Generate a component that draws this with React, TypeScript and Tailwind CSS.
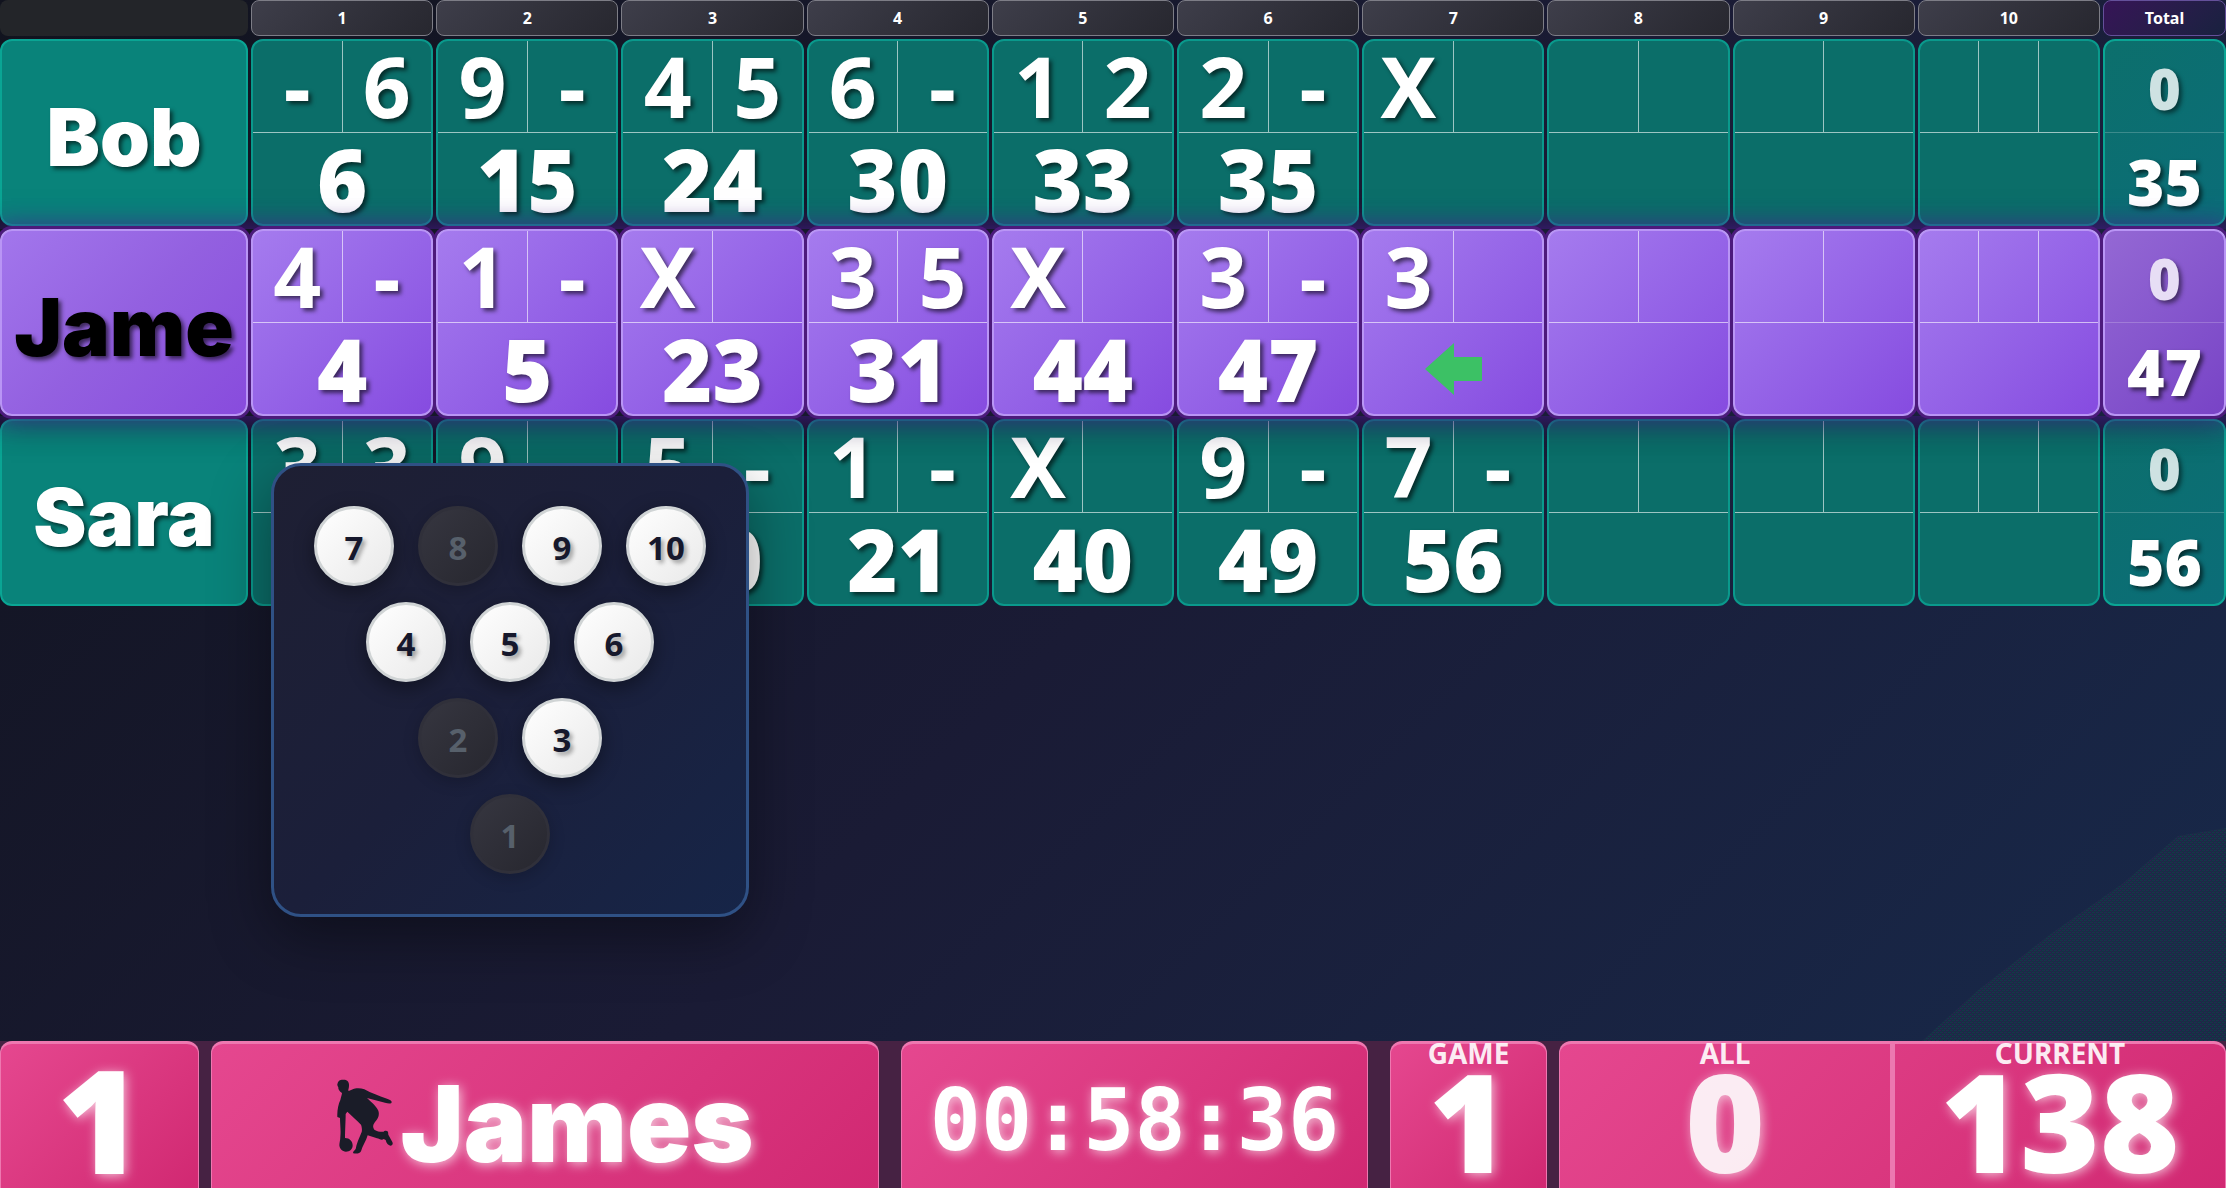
import clsx from "clsx";
import type { ReactNode } from "react";

type Player = {
  name: string;
  active?: boolean;
  throws: string[][];
  totals: string[];
  handicap: string;
  total: string;
};

const FRAMES = [1, 2, 3, 4, 5, 6, 7, 8, 9, 10];

const players: Player[] = [
  {
    name: "Bob",
    throws: [["-", "6"], ["9", "-"], ["4", "5"], ["6", "-"], ["1", "2"], ["2", "-"], ["X", ""]],
    totals: ["6", "15", "24", "30", "33", "35"],
    handicap: "0",
    total: "35",
  },
  {
    name: "Jame",
    active: true,
    throws: [["4", "-"], ["1", "-"], ["X", ""], ["3", "5"], ["X", ""], ["3", "-"], ["3", ""]],
    totals: ["4", "5", "23", "31", "44", "47"],
    handicap: "0",
    total: "47",
  },
  {
    name: "Sara",
    throws: [["3", "3"], ["9", "-"], ["5", "-"], ["1", "-"], ["X", ""], ["9", "-"], ["7", "-"]],
    totals: ["6", "15", "20", "21", "40", "49", "56"],
    handicap: "0",
    total: "56",
  },
];

const pinRows = [[7, 8, 9, 10], [4, 5, 6], [2, 3], [1]];
const downPins = [8, 2, 1];

function TurnArrow() {
  return (
    <svg width="57" height="52" viewBox="0 0 57 52" aria-label="Current turn">
      <path d="M0 26 29 0v14h28v24H29v14z" fill="#3cc165" />
    </svg>
  );
}

function Bowler() {
  return (
    <svg width="56" height="75" viewBox="60 55 168 225" fill="#1a1c28" className="shrink-0" aria-hidden="true">
      <path d="M62 68C64 58 72 57 80 57C90 57 97 63 96 75C96 84 92 88 95 91L104 87C118 81 130 82 142 86C162 97 188 106 206 113C214 117 222 118 224 123C225 130 214 129 204 126L150 112C160 122 178 136 184 150C188 162 184 174 174 184C168 192 166 200 172 207C182 213 192 214 200 213C202 209 210 209 213 213L214 222L226 244C229 250 226 255 220 255C214 254 208 248 206 238L200 235C194 240 186 234 180 233L152 224C148 240 136 256 132 272C129 280 116 279 109 278C106 274 112 270 116 265C118 250 126 234 134 214C136 206 134 198 132 192C122 180 104 166 91 153L86 160C86 180 84 210 84 232C98 232 107 242 107 254C107 266 98 273 87 273C76 273 68 264 67 254C67 244 70 239 70 228C72 210 69 190 69 172L61 169C60 150 64 130 70 118C72 110 74 104 75 97C66 92 63 84 64 80C61 77 60 72 62 68Z" />
    </svg>
  );
}

function Frame({ player, index }: { player: Player; index: number }) {
  const slots = index === 9 ? 3 : 2;
  const throws = player.throws[index] ?? [];
  return (
    <td
      className={clsx(
        "h-[187px] rounded-xl border-2 p-0",
        player.active
          ? "border-[#b995f5] bg-linear-135 from-[#a57bee] to-[#864be0] shadow-[0_0_0_3px_#4c1a7c]"
          : "border-[#0a998c] bg-[#0b6e69]",
      )}
    >
      <div className="grid h-full grid-rows-2">
        <div className="flex border-b border-white/60">
          {Array.from({ length: slots }, (_, i) => (
            <div
              key={i}
              className={clsx(
                "flex flex-1 items-center justify-center text-[84px] leading-none font-bold",
                i > 0 && "border-l border-white/60",
              )}
            >
              {throws[i]}
            </div>
          ))}
        </div>
        <div className="flex items-center justify-center pt-0.5 text-[86px] leading-none font-black">
          {player.active && index === 6 ? <TurnArrow /> : player.totals[index]}
        </div>
      </div>
    </td>
  );
}

function PlayerRow({ player }: { player: Player }) {
  return (
    <tr
      className={clsx(
        player.active &&
          "relative z-10 shadow-[0_0_24px_4px_rgba(91,33,182,0.6),0_8px_32px_rgba(0,0,0,0.4)]",
      )}
    >
      <th
        scope="row"
        className={clsx(
          "h-[187px] rounded-xl border-2 p-0 pt-2 font-[Inter,sans-serif] text-[80px] leading-none font-black",
          player.active
            ? "border-[#b995f5] bg-linear-135 from-[#a276ec] via-[#9360e0] to-[#884bdd] text-black shadow-[0_0_0_3px_#4c1a7c]"
            : "border-[#0aa594] bg-[#09837a]",
        )}
      >
        {player.name}
      </th>
      {FRAMES.map((n, i) => (
        <Frame key={n} player={player} index={i} />
      ))}
      <td
        className={clsx(
          "h-[187px] rounded-xl border-2 p-0",
          player.active
            ? "border-[#b995f5] bg-linear-135 from-[#9468d4] to-[#7843c6] shadow-[0_0_0_3px_#4c1a7c]"
            : "border-[#0aa594] bg-linear-135 from-[#0c6f6c] to-[#0b6d78]",
        )}
      >
        <div className="grid h-full grid-rows-2 font-black">
          <div className="flex items-center justify-center border-b border-white/20 pt-1 text-[56px] leading-none">
            <span className="opacity-80">{player.handicap}</span>
          </div>
          <div className="flex items-center justify-center pt-2 text-[64px] leading-none">
            {player.total}
          </div>
        </div>
      </td>
    </tr>
  );
}

function Pin({ n, down }: { n: number; down: boolean }) {
  return (
    <div
      className={clsx(
        "flex size-20 items-center justify-center rounded-full border-3 pt-0.5 text-[33px] leading-none font-bold",
        down
          ? "border-[#30303a] bg-linear-135 from-[#363640] to-[#27272f] text-[#57606b] shadow-[0_4px_16px_rgba(0,0,0,0.2)]"
          : "border-[#d0d4d5] bg-linear-135 from-white to-[#e9e9e9] text-[#16182c] shadow-[0_6px_20px_rgba(0,0,0,0.4)] text-shadow-[3px_3px_4px_rgba(0,0,0,0.35)]",
      )}
    >
      {n}
    </div>
  );
}

function PinDeck() {
  return (
    <div className="absolute top-[463px] left-[271px] z-20 flex flex-col gap-4 rounded-[30px] border-3 border-[#2f5185] bg-linear-135 from-[#1e1f33] via-[#1b1f3a] to-[#162548] p-10 shadow-[0_20px_60px_rgba(0,0,0,0.4)]">
      {pinRows.map((row) => (
        <div key={row[0]} className="flex justify-center gap-6">
          {row.map((n) => (
            <Pin key={n} n={n} down={downPins.includes(n)} />
          ))}
        </div>
      ))}
    </div>
  );
}

function Panel({ className, children }: { className?: string; children: ReactNode }) {
  return (
    <div
      className={clsx(
        "flex rounded-t-xl border-x border-t-3 border-[#ee78b0] bg-linear-135 from-[#e5478f] to-[#d12872]",
        className,
      )}
    >
      {children}
    </div>
  );
}

function Stat({ label, value, dim }: { label: string; value: string; dim?: boolean }) {
  return (
    <div className="flex flex-1 flex-col items-center">
      <div className="text-[28px] leading-[18px] font-bold opacity-90 text-shadow-none">{label}</div>
      <div className={clsx("text-[136px] leading-[118px] font-black", dim && "opacity-90")}>{value}</div>
    </div>
  );
}

export default function App() {
  return (
    <div className="relative flex min-h-screen flex-col justify-between overflow-hidden bg-linear-135 from-[#11131e] via-[#1a1b35] to-[#162a4c] font-['Noto_Sans',sans-serif] text-white">
      <main className="-mx-[3px] -mt-[3px]">
        <table className="w-full table-fixed border-separate border-spacing-[3px] text-shadow-[3px_3px_4px_rgba(0,0,0,0.6)]">
          <colgroup>
            <col className="w-[248px]" />
            {FRAMES.map((n) => (
              <col key={n} />
            ))}
            <col className="w-[123px]" />
          </colgroup>
          <thead>
            <tr className="text-base leading-none font-black text-shadow-none">
              <td className="h-9 rounded-lg bg-[#232529] p-0" />
              {FRAMES.map((n) => (
                <th
                  key={n}
                  scope="col"
                  className="rounded-lg border border-[#7d7d86] bg-linear-135 from-[#3e3e4a] to-[#27272f] p-0"
                >
                  {n}
                </th>
              ))}
              <th
                scope="col"
                className="rounded-lg border border-[#64509a] bg-linear-135 from-[#361457] to-[#18213f] p-0"
              >
                Total
              </th>
            </tr>
          </thead>
          <tbody>
            {players.map((p) => (
              <PlayerRow key={p.name} player={p} />
            ))}
          </tbody>
        </table>
      </main>

      <PinDeck />

      <svg className="absolute right-0 bottom-0" width="304" height="362" viewBox="0 0 304 362" aria-hidden="true">
        <defs>
          <pattern id="grain" width="4" height="4" patternUnits="userSpaceOnUse">
            <rect width="4" height="4" fill="#1a2c45" />
            <path d="M0 0h2v1H0zM2 2h2v1H2z" fill="#123a48" />
            <path d="M2 0h1v1H2zM0 2h1v1H0z" fill="#2f1c54" />
          </pattern>
        </defs>
        <path d="M0 215 55 165 130 107 200 58 256 10 304 2V362H0z" fill="url(#grain)" />
      </svg>

      <footer className="relative flex h-[147px] bg-[#462243] text-shadow-[2px_2px_12px_rgba(255,255,255,0.7)]">
        <Panel className="mr-3 w-[199px] items-center justify-center pt-1 text-[144px] leading-none font-black">
          1
        </Panel>
        <Panel className="flex-1 items-center justify-center gap-2 font-[Inter,sans-serif] text-[106px] leading-none font-black">
          <Bowler />
          <span className="pt-4">James</span>
        </Panel>
        <Panel className="mx-[22px] w-[467px] items-center justify-center pt-2 font-['DejaVu_Sans_Mono',monospace] text-[85px] leading-none font-bold">
          <time>00:58:36</time>
        </Panel>
        <Panel className="mr-3 w-[157px]">
          <Stat label="GAME" value="1" />
        </Panel>
        <Panel className="w-[667px]">
          <Stat label="ALL" value="0" dim />
          <div className="w-[5px] bg-[#ec78b0]" />
          <Stat label="CURRENT" value="138" />
        </Panel>
      </footer>
    </div>
  );
}
